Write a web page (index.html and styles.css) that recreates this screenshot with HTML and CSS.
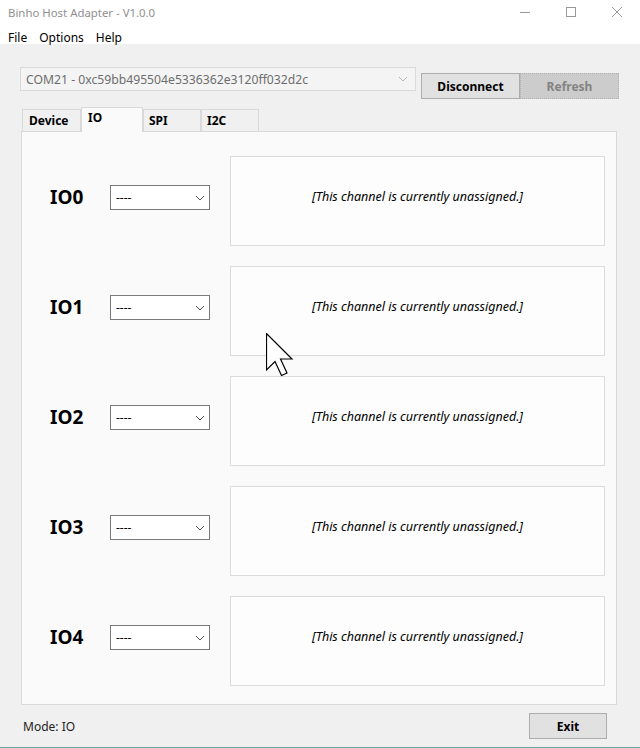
FILE: index.html
```html
<!DOCTYPE html>
<html>
<head>
<meta charset="utf-8">
<link rel="stylesheet" href="styles.css">
</head>
<body>
<div class="window">
  <div class="titlebar">
    <span class="title">Binho Host Adapter - V1.0.0</span>
    <div class="controls">
      <span class="ctl"><svg width="12" height="12" viewBox="0 0 12 12"><path d="M1 6.5H11" stroke="#999" stroke-width="1"/></svg></span>
      <span class="ctl"><svg width="12" height="12" viewBox="0 0 12 12"><rect x="1.5" y="1.5" width="9" height="9" fill="none" stroke="#999" stroke-width="1"/></svg></span>
      <span class="ctl"><svg width="12" height="12" viewBox="0 0 12 12"><path d="M1 1L11 11M11 1L1 11" stroke="#999" stroke-width="1"/></svg></span>
    </div>
  </div>
  <div class="menubar">
    <span class="menu">File</span>
    <span class="menu">Options</span>
    <span class="menu">Help</span>
  </div>
  <div class="content">
    <div class="toprow">
      <div class="combo">
        <span class="combo-text">COM21 - 0xc59bb495504e5336362e3120ff032d2c</span>
        <svg class="chev" width="10" height="6" viewBox="0 0 10 6"><path d="M1 1L5 5L9 1" fill="none" stroke="#b5b5b5" stroke-width="1"/></svg>
      </div>
      <div class="buttons">
        <button class="btn">Disconnect</button>
        <button class="btn disabled">Refresh</button>
      </div>
    </div>
    <div class="tabs">
      <span class="tab first">Device</span>
      <span class="tab active">IO</span>
      <span class="tab">SPI</span>
      <span class="tab">I2C</span>
    </div>
    <div class="panel">
      <div class="row">
        <span class="label">IO0</span>
        <div class="select"><span>----</span><svg width="10" height="6" viewBox="0 0 10 6"><path d="M1 1L5 5L9 1" fill="none" stroke="#555" stroke-width="1"/></svg></div>
        <div class="box">[This channel is currently unassigned.]</div>
      </div>
      <div class="row">
        <span class="label">IO1</span>
        <div class="select"><span>----</span><svg width="10" height="6" viewBox="0 0 10 6"><path d="M1 1L5 5L9 1" fill="none" stroke="#555" stroke-width="1"/></svg></div>
        <div class="box">[This channel is currently unassigned.]</div>
      </div>
      <div class="row">
        <span class="label">IO2</span>
        <div class="select"><span>----</span><svg width="10" height="6" viewBox="0 0 10 6"><path d="M1 1L5 5L9 1" fill="none" stroke="#555" stroke-width="1"/></svg></div>
        <div class="box">[This channel is currently unassigned.]</div>
      </div>
      <div class="row">
        <span class="label">IO3</span>
        <div class="select"><span>----</span><svg width="10" height="6" viewBox="0 0 10 6"><path d="M1 1L5 5L9 1" fill="none" stroke="#555" stroke-width="1"/></svg></div>
        <div class="box">[This channel is currently unassigned.]</div>
      </div>
      <div class="row">
        <span class="label">IO4</span>
        <div class="select"><span>----</span><svg width="10" height="6" viewBox="0 0 10 6"><path d="M1 1L5 5L9 1" fill="none" stroke="#555" stroke-width="1"/></svg></div>
        <div class="box">[This channel is currently unassigned.]</div>
      </div>
    </div>
    <div class="footer">
      <span class="mode">Mode: IO</span>
      <button class="btn exit">Exit</button>
    </div>
  </div>
  <div class="bottomline"></div>
  <svg class="cursor" width="30" height="46" viewBox="0 0 30 46"><path d="M0.5 0.5L0.5 37L9 28.5L15.5 42.5L21 40L14.5 26L26 26Z" fill="#fff" stroke="#000" stroke-width="1.2" stroke-linejoin="miter"/></svg>
</div>
</body>
</html>
```
FILE: styles.css
```css
* { box-sizing: border-box; }
html, body { margin: 0; padding: 0; }
body {
  font-family: "Noto Sans", "Open Sans", sans-serif;
  font-size: 12px;
  color: #000;
}
.window {
  position: relative;
  width: 640px;
  height: 748px;
  background: #f0f0f0;
  display: flex;
  flex-direction: column;
  overflow: hidden;
}
.titlebar {
  height: 24px;
  background: #fff;
  display: flex;
  align-items: center;
  padding-left: 8px;
}
.title { color: #8f8f8f; font-size: 11.4px; }
.controls { margin-left: auto; display: flex; height: 24px; }
.ctl { width: 46px; display: flex; align-items: center; justify-content: center; padding-bottom: 1px; }
.menubar {
  height: 20px;
  background: #fff;
  display: flex;
  align-items: center;
  padding-left: 8px;
  gap: 12px;
  padding-top: 6px;
}
.menu { color: #000; }
.content {
  flex: 1;
  padding: 23px 23px 0 20px;
  display: flex;
  flex-direction: column;
}
.toprow { display: flex; align-items: flex-start; height: 32px; }
.combo {
  flex-shrink: 0;
  width: 396px;
  height: 24px;
  border: 1px solid #dadada;
  background: #f4f4f4;
  display: flex;
  align-items: center;
  padding-left: 5px;
  padding-right: 7px;
}
.combo-text { color: #6d6d6d; flex: 1; font-size: 12.2px; }
.buttons { display: flex; flex-shrink: 0; margin-left: 5px; margin-top: 6px; }
.btn {
  font-family: inherit;
  font-size: 12px;
  font-weight: 700;
  width: 99px;
  height: 26px;
  border: 1px solid #adadad;
  background: #e1e1e1;
  color: #000;
  padding: 0;
  margin: 0;
  flex-shrink: 0;
}
.btn.disabled {
  background: #cccccc;
  border: 1px dotted #b0b0b0;
  color: #838383;
}
.tabs {
  display: flex;
  align-items: flex-end;
  height: 24px;
  margin-top: 8px;
  padding-left: 2px;
  position: relative;
  z-index: 1;
}
.tab {
  height: 22px;
  border: 1px solid #d9d9d9;
  border-bottom: none;
  background: #f0f0f0;
  font-weight: 700;
  padding-left: 5px;
  padding-top: 2px;
  width: 58px;
  flex-shrink: 0;
}
.tab.first { width: 59px; padding-left: 6px; }
.tab.active {
  height: 25px;
  width: 62px;
  background: #fafafa;
  padding-left: 6px;
  padding-top: 1px;
  margin-bottom: -1px;
}
.panel {
  margin-left: 1px;
  width: 596px;
  height: 574px;
  border: 1px solid #d9d9d9;
  background: #fafafa;
  padding-top: 24px;
  display: flex;
  flex-direction: column;
  gap: 20px;
}
.row { display: flex; align-items: flex-start; height: 90px; }
.label {
  width: 88px;
  padding-left: 28px;
  margin-top: 29px;
  line-height: 24px;
  font-size: 19px;
  font-weight: 700;
}
.select {
  width: 100px;
  height: 25px;
  margin-top: 29px;
  border: 1px solid #7a7a7a;
  background: #fff;
  display: flex;
  align-items: center;
  justify-content: space-between;
  padding-left: 5px;
  padding-right: 4px;
}
.box {
  width: 375px;
  height: 90px;
  margin-left: 20px;
  border: 1px solid #dcdcdc;
  background: #fdfdfd;
  display: flex;
  align-items: center;
  justify-content: center;
  font-style: italic;
  font-size: 12.5px;
  padding-bottom: 10px;
}
.footer {
  display: flex;
  align-items: center;
  justify-content: space-between;
  margin-top: 8px;
  height: 26px;
  padding-left: 3px;
  padding-right: 10px;
}
.mode { color: #222; }
.btn.exit { width: 78px; }
.bottomline { height: 1px; background: #5fa9a5; }
.cursor { position: absolute; left: 266px; top: 333px; }
```
